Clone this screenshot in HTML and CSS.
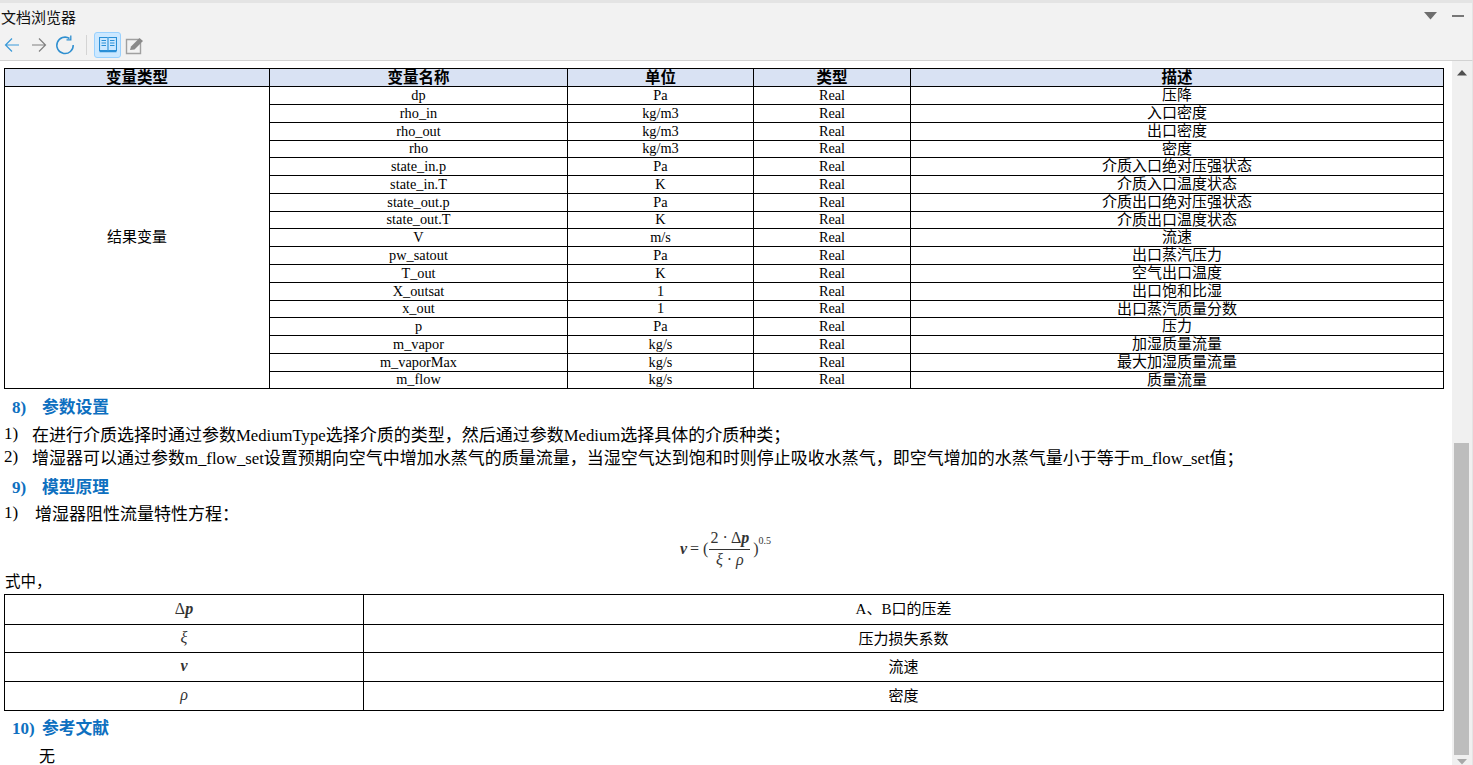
FILE: index.html
```html
<!DOCTYPE html>
<html lang="zh">
<head>
  <meta charset="UTF-8">
  <meta name="viewport" content="width=device-width, initial-scale=1.0">
  <title>文档浏览器</title>
  <link rel="stylesheet" href="styles.css">
</head>
<body>
  <div class="browser">
    <div class="panel-head">
      <div class="title-row">
        <span class="title">文档浏览器</span>
        <div class="window-btns">
          <svg width="13" height="8" viewBox="0 0 13 8"><path d="M0 0h13L6.500 7.500z" fill="#6e6e6e"/></svg>
          <span class="minimize"></span>
        </div>
      </div>
      <div class="toolbar">
        <svg class="tool back" width="16" height="16" viewBox="0 0 16 16" fill="none" stroke="#3a9ad9" stroke-width="1.200"><path d="M15 8H1.500M8 1.500L1.500 8 8 14.500"/></svg>
        <svg class="tool forward" width="16" height="16" viewBox="0 0 16 16" fill="none" stroke="#808080" stroke-width="1.200"><path d="M1 8h13.500M8 1.500L14.500 8 8 14.500"/></svg>
        <svg class="tool reload" width="20" height="20" viewBox="0 0 20 20" fill="none" stroke="#2f8fd0" stroke-width="1.500"><path d="M14.500 3.500A8.200 8.200 0 1 0 18.200 10"/><path d="M11.500 4.800h4.300V.5" stroke-width="1.300"/></svg>
        <span class="sep"></span>
        <span class="tool-on">
          <svg width="18" height="18" viewBox="0 0 18 18" fill="none" stroke="#2a8fd6" stroke-width="1.100"><path d="M.5 1.500h7.500q1 0 1 1 0-1 1-1h7.500v13H10q-1 0-1 1 0-1-1-1H.5z"/><path d="M9 2.500v13M2.500 4.500h4.500M2.500 7h4.500M2.500 9.500h4.500M11 4.500h4.500M11 7h4.500M11 9.500h4.500"/><path d="M.5 15.500h17" stroke-width="1.500"/></svg>
        </span>
        <svg class="tool" width="19" height="19" viewBox="0 0 19 19"><path d="M14 3.500H1.500v14h14V7" fill="none" stroke="#a0a0a0" stroke-width="1.400"/><path d="M5 14l1-3.500L14.500 2 18 5l-8.500 8.500z" fill="#8a8a8a"/></svg>
      </div>
    </div>

    <div class="viewer">
      <div class="doc">
        <table class="grid vars">
          <colgroup>
            <col class="c1"><col class="c2"><col class="c3"><col class="c4"><col>
          </colgroup>
          <thead>
            <tr><th><span class="zh">变量类型</span></th><th><span class="zh">变量名称</span></th><th><span class="zh">单位</span></th><th><span class="zh">类型</span></th><th><span class="zh">描述</span></th></tr>
          </thead>
          <tbody>
            <tr><td rowspan="17"><span class="zh">结果变量</span></td><td>dp</td><td>Pa</td><td>Real</td><td><span class="zh">压降</span></td></tr>
            <tr><td>rho_in</td><td>kg/m3</td><td>Real</td><td><span class="zh">入口密度</span></td></tr>
            <tr><td>rho_out</td><td>kg/m3</td><td>Real</td><td><span class="zh">出口密度</span></td></tr>
            <tr class="thin"><td>rho</td><td>kg/m3</td><td>Real</td><td><span class="zh">密度</span></td></tr>
            <tr><td>state_in.p</td><td>Pa</td><td>Real</td><td><span class="zh">介质入口绝对压强状态</span></td></tr>
            <tr><td>state_in.T</td><td>K</td><td>Real</td><td><span class="zh">介质入口温度状态</span></td></tr>
            <tr><td>state_out.p</td><td>Pa</td><td>Real</td><td><span class="zh">介质出口绝对压强状态</span></td></tr>
            <tr class="thin"><td>state_out.T</td><td>K</td><td>Real</td><td><span class="zh">介质出口温度状态</span></td></tr>
            <tr><td>V</td><td>m/s</td><td>Real</td><td><span class="zh">流速</span></td></tr>
            <tr><td>pw_satout</td><td>Pa</td><td>Real</td><td><span class="zh">出口蒸汽压力</span></td></tr>
            <tr><td>T_out</td><td>K</td><td>Real</td><td><span class="zh">空气出口温度</span></td></tr>
            <tr><td>X_outsat</td><td>1</td><td>Real</td><td><span class="zh">出口饱和比湿</span></td></tr>
            <tr class="thin"><td>x_out</td><td>1</td><td>Real</td><td><span class="zh">出口蒸汽质量分数</span></td></tr>
            <tr><td>p</td><td>Pa</td><td>Real</td><td><span class="zh">压力</span></td></tr>
            <tr><td>m_vapor</td><td>kg/s</td><td>Real</td><td><span class="zh">加湿质量流量</span></td></tr>
            <tr><td>m_vaporMax</td><td>kg/s</td><td>Real</td><td><span class="zh">最大加湿质量流量</span></td></tr>
            <tr class="thin"><td>m_flow</td><td>kg/s</td><td>Real</td><td><span class="zh">质量流量</span></td></tr>
          </tbody>
        </table>

        <h2 class="sec sec-8"><span class="sec-no">8)</span><span>参数设置</span></h2>
        <div class="item"><span class="item-no">1)</span><p>在进行介质选择时通过参数<span class="en">MediumType</span>选择介质的类型，然后通过参数<span class="en">Medium</span>选择具体的介质种类；</p></div>
        <div class="item"><span class="item-no">2)</span><p>增湿器可以通过参数<span class="en">m_flow_set</span>设置预期向空气中增加水蒸气的质量流量，当湿空气达到饱和时则停止吸收水蒸气，即空气增加的水蒸气量小于等于<span class="en">m_flow_set</span>值；</p></div>

        <h2 class="sec sec-9"><span class="sec-no">9)</span><span>模型原理</span></h2>
        <div class="item item-wide"><span class="item-no">1)</span><p>增湿器阻性流量特性方程：</p></div>

        <div class="formula">
          <i class="sym">v</i><span class="eq">= (</span>
          <span class="frac"><span class="top">2 · Δ<i class="sym">p</i></span><span class="bot"><i>ξ</i> · <i>ρ</i></span></span>
          <span class="eq">)</span><sup>0.5</sup>
        </div>

        <p class="where">式中，</p>
        <table class="grid symbols">
          <colgroup><col class="s1"><col></colgroup>
          <tr class="first"><td class="math"><span class="delta">Δ</span><i class="sym">p</i></td><td><span class="en-s">A</span>、<span class="en-s">B</span>口的压差</td></tr>
          <tr class="short"><td class="math"><i>ξ</i></td><td>压力损失系数</td></tr>
          <tr><td class="math"><i class="sym">v</i></td><td>流速</td></tr>
          <tr><td class="math"><i>ρ</i></td><td>密度</td></tr>
        </table>

        <h2 class="sec sec-10"><span class="sec-no">10)</span><span>参考文献</span></h2>
        <p class="none">无</p>
      </div>

      <div class="scrollbar">
        <svg class="arrow" width="10" height="6" viewBox="0 0 10 6"><path d="M5 0l5 5.500H0z" fill="#505050"/></svg>
        <div class="track"><div class="thumb"></div></div>
        <svg class="arrow" width="10" height="6" viewBox="0 0 10 6"><path d="M0 0h10L5 5.500z" fill="#a8a8a8"/></svg>
      </div>
    </div>
  </div>
</body>
</html>
```

FILE: styles.css
```css
html, body {
  margin: 0;
  height: 100%;
  overflow: hidden;
}

body {
  font-family: "Liberation Serif", "Noto Sans CJK SC", serif;
  color: #000;
  background: #fff;
}

.browser {
  height: 765px;
  display: flex;
  flex-direction: column;
}

.panel-head {
  height: 57px;
  flex: none;
  background: #f2f2f2;
  border-top: 3px solid #e4e4e4;
  border-bottom: 1px solid #d2d2d2;
  border-right: 1px solid #e4e4e4;
}

.title-row {
  height: 27px;
  display: flex;
  align-items: center;
  justify-content: space-between;
  padding: 0 3px 0 1px;
}

.title {
  font-family: "Noto Sans CJK SC", sans-serif;
  font-size: 15px;
  color: #111;
}

.window-btns {
  display: flex;
  align-items: center;
  gap: 15px;
  margin-right: 5px;
  padding-bottom: 1px;
}

.minimize {
  width: 12px;
  height: 2px;
  background: #777;
}

.toolbar {
  height: 30px;
  display: flex;
  align-items: center;
  padding-left: 4px;
}

.tool {
  margin-right: 5px;
  flex: none;
}

.back { margin-right: 11px; }
.forward { margin-right: 8px; }

.sep {
  width: 1px;
  height: 20px;
  background: #d4d4d4;
  margin: 0 7px 0 6px;
}

.tool-on {
  width: 25px;
  height: 24px;
  display: flex;
  align-items: center;
  justify-content: center;
  background: #cce8ff;
  border: 1px solid #99d1ff;
  border-radius: 3px;
  margin-right: 4px;
}

.viewer {
  flex: 1;
  min-height: 0;
  display: flex;
}

.doc {
  width: 1452px;
  flex: none;
  padding: 7px 0 0 4px;
  box-sizing: border-box;
  overflow: hidden;
}

.grid {
  width: 1440px;
  table-layout: fixed;
  border-collapse: collapse;
  border: 1px solid #000;
  text-align: center;
}

.grid td, .grid th {
  border: 1px solid #000;
  padding: 0;
}

.zh {
  font-family: "Noto Sans CJK SC", sans-serif;
  font-size: 15px;
}

.vars {
  font-size: 14.300px;
  line-height: 12px;
}

.vars td, .vars th {
  padding-bottom: 2px;
}

.vars .c1 { width: 265px; }
.vars .c2 { width: 298px; }
.vars .c3 { width: 186px; }
.vars .c4 { width: 157px; }

.vars tr { height: 18px; }
.vars tr.thin { height: 17px; }

.vars th {
  background: #d9e2f3;
  font-weight: bold;
  font-size: 15.500px;
}

.vars th .zh { font-size: 15.500px; }

.sec {
  margin: 0;
  display: flex;
  align-items: center;
  color: #0e70c0;
  font-size: 16.800px;
  line-height: 24px;
  padding-left: 8px;
}

.sec-no {
  width: 30px;
  font-size: 17px;
}

.sec-8 { margin-top: 7px; }
.sec-9 { margin-top: 8px; }
.sec-10 { margin-top: 6px; }

.item {
  display: flex;
  font-size: 17px;
  line-height: 23px;
  height: 23px;
  font-family: "Noto Sans CJK SC", sans-serif;
  white-space: nowrap;
}

.sec-8 + .item { margin-top: 2px; }
.sec-9 + .item { margin-top: 1px; }

.item-no {
  width: 28px;
  font-family: "Liberation Serif", serif;
  font-size: 17px;
}

.item-wide .item-no { width: 31px; }

.item p, .where, .none {
  margin: 0;
}

.en {
  font-family: "Liberation Serif", serif;
  font-size: 16.700px;
}

.formula {
  height: 42px;
  margin-top: 4px;
  display: flex;
  align-items: center;
  justify-content: center;
  gap: 1px;
  padding-right: 5px;
  font-size: 16px;
  color: #333;
}

.eq {
  margin-left: 2px;
}

.sym {
  font-weight: bold;
}

.frac {
  display: inline-flex;
  flex-direction: column;
  align-items: center;
  line-height: 20px;
}

.frac .top {
  border-bottom: 1px solid #333;
  padding: 0 1px 1px;
}

.formula sup {
  font-size: 10px;
  align-self: flex-start;
  margin: 7px 0 0 -1px;
}

.where {
  font-family: "Noto Sans CJK SC", sans-serif;
  font-size: 15.500px;
  line-height: 20px;
  padding-left: 1px;
}

.symbols {
  margin-top: 4px;
  font-family: "Noto Sans CJK SC", sans-serif;
  font-size: 15px;
  line-height: 18px;
}

.symbols td {
  padding-bottom: 2px;
}

.symbols .s1 { width: 359px; }

.symbols tr { height: 29px; }
.symbols tr.short { height: 28px; }
.symbols tr.first { height: 30px; }

.math {
  font-family: "Liberation Serif", serif;
  font-size: 16px;
  color: #333;
}

.en-s {
  font-family: "Liberation Serif", serif;
}

.none {
  font-family: "Noto Sans CJK SC", sans-serif;
  font-size: 16px;
  line-height: 18px;
  padding-left: 35px;
  margin-top: 5px;
}

.scrollbar {
  width: 21px;
  flex: none;
  display: flex;
  flex-direction: column;
  align-items: center;
  background: #f0f0f0;
  padding: 9px 1px 0 0;
  box-sizing: border-box;
  border-right: 1px solid #e4e4e4;
  overflow: hidden;
}

.track {
  flex: 1;
  width: 100%;
  padding: 0 2px;
  box-sizing: border-box;
  display: flex;
  flex-direction: column;
  justify-content: flex-end;
  margin-bottom: 4px;
}

.thumb {
  height: 312px;
  background: #bdbdbd;
}

.arrow {
  flex: none;
}
```
